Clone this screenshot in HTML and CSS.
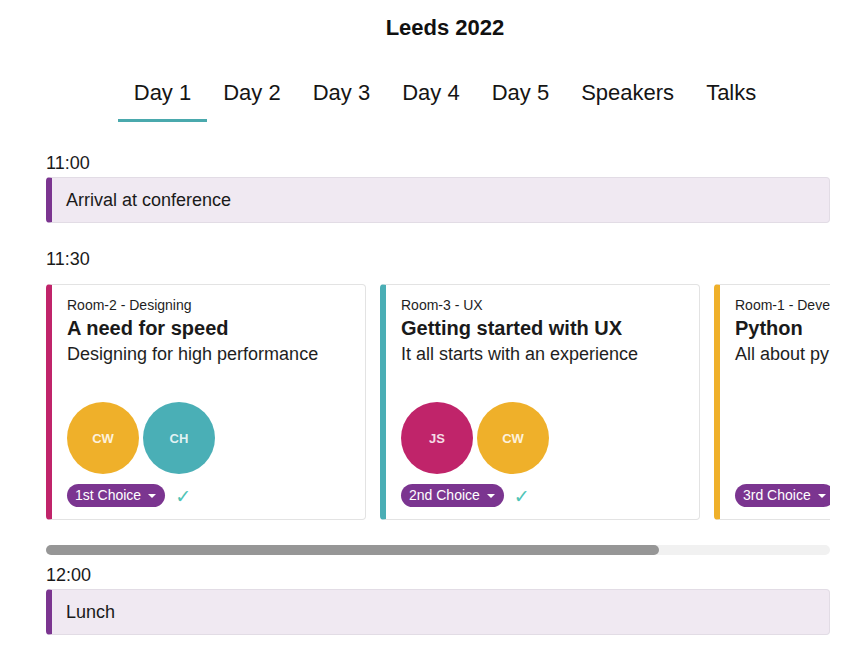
FILE: index.html
```html
<!DOCTYPE html>
<html lang="en">
<head>
<meta charset="utf-8">
<title>Leeds 2022</title>
<link rel="stylesheet" href="styles.css">
</head>
<body>
<div class="page">
  <header class="header">
    <h1 class="title">Leeds 2022</h1>
    <nav class="tabs">
      <a class="tab active">Day 1</a>
      <a class="tab">Day 2</a>
      <a class="tab">Day 3</a>
      <a class="tab">Day 4</a>
      <a class="tab">Day 5</a>
      <a class="tab">Speakers</a>
      <a class="tab">Talks</a>
    </nav>
  </header>

  <main class="schedule">
    <section class="slot">
      <div class="time">11:00</div>
      <div class="event">Arrival at conference</div>
    </section>

    <section class="slot slot-talks">
      <div class="time">11:30</div>
      <div class="scroller">
        <div class="cards">
          <article class="card card-magenta">
            <div class="room">Room-2 - Designing</div>
            <h2 class="talk-title">A need for speed</h2>
            <div class="talk-sub">Designing for high performance</div>
            <div class="avatars">
              <span class="avatar av-yellow">CW</span>
              <span class="avatar av-teal">CH</span>
            </div>
            <div class="footer">
              <span class="choice">1st Choice<span class="caret"></span></span>
              <span class="check">✓</span>
            </div>
          </article>
          <article class="card card-teal">
            <div class="room">Room-3 - UX</div>
            <h2 class="talk-title">Getting started with UX</h2>
            <div class="talk-sub">It all starts with an experience</div>
            <div class="avatars">
              <span class="avatar av-magenta">JS</span>
              <span class="avatar av-yellow">CW</span>
            </div>
            <div class="footer">
              <span class="choice">2nd Choice<span class="caret"></span></span>
              <span class="check">✓</span>
            </div>
          </article>
          <article class="card card-yellow">
            <div class="room">Room-1 - Deve</div>
            <h2 class="talk-title">Python</h2>
            <div class="talk-sub">All about py</div>
            <div class="footer">
              <span class="choice">3rd Choice<span class="caret"></span></span>
            </div>
          </article>
        </div>
      </div>
      <div class="scrollbar"><div class="thumb" style="width: 78.2%"></div></div>
    </section>

    <section class="slot slot-after">
      <div class="time">12:00</div>
      <div class="event">Lunch</div>
    </section>
  </main>
</div>
</body>
</html>
```

FILE: styles.css
```css
* { box-sizing: border-box; }

html, body {
  margin: 0;
  padding: 0;
  background: #ffffff;
  color: #1e1e1e;
  font-family: "Liberation Sans", Arial, sans-serif;
}

.page {
  margin-left: 46px;
  width: 798px;
  padding-top: 15px;
}

.header {
  display: flex;
  flex-direction: column;
  align-items: center;
}

.title {
  margin: 0;
  font-size: 22px;
  line-height: 26px;
  font-weight: bold;
  color: #111111;
}

.tabs {
  display: flex;
  margin-top: 30px;
}

.tab {
  display: block;
  font-size: 22px;
  line-height: 26px;
  padding: 9px 16px 13px;
  border-bottom: 3px solid transparent;
  color: #151515;
}

.tab.active {
  border-bottom-color: #4aa9ad;
}

.schedule {
  width: 784px;
  padding-top: 30px;
}

.time {
  font-size: 18px;
  line-height: 22px;
  margin-bottom: 3px;
  color: #1a1a1a;
}

.event {
  background: #f0e9f2;
  border: 1px solid #e2dce5;
  border-left: 6px solid #7b3590;
  border-radius: 4px;
  font-size: 18px;
  line-height: 22px;
  padding: 11px 14px;
  color: #1a1a1a;
}

.slot-talks {
  margin-top: 25px;
}

.slot-talks .time {
  margin-bottom: 14px;
}

.scroller {
  width: 784px;
  overflow: hidden;
}

.cards {
  display: flex;
  width: max-content;
}

.card {
  width: 320px;
  height: 236px;
  margin-right: 14px;
  display: flex;
  flex-direction: column;
  border: 1px solid #e3e3e3;
  border-left-width: 6px;
  border-radius: 4px;
  padding: 12px 14px 12px 15px;
  background: #ffffff;
}

.card-magenta { border-left-color: #c0246a; }
.card-teal { border-left-color: #4aaeb5; }
.card-yellow { border-left-color: #efb02a; }

.room {
  font-size: 14px;
  line-height: 17px;
  color: #1e1e1e;
}

.talk-title {
  margin: 2px 0 0;
  font-size: 20px;
  line-height: 24px;
  font-weight: bold;
  color: #1a1a1a;
}

.talk-sub {
  margin-top: 3px;
  font-size: 18px;
  line-height: 22px;
  color: #1e1e1e;
  white-space: nowrap;
}

.avatars {
  margin-top: auto;
  display: flex;
  gap: 4px;
}

.avatar {
  width: 72px;
  height: 72px;
  border-radius: 50%;
  display: flex;
  align-items: center;
  justify-content: center;
  font-size: 13px;
  font-weight: bold;
  color: rgba(255, 255, 255, 0.85);
}

.av-yellow { background: #efb02a; }
.av-teal { background: #4aafb6; }
.av-magenta { background: #c0246a; }

.footer {
  margin-top: 10px;
  display: flex;
  align-items: center;
}

.card-yellow .footer {
  margin-top: auto;
}

.choice {
  display: inline-flex;
  align-items: center;
  height: 23px;
  padding: 0 9px 0 8px;
  border-radius: 12px;
  background: #7b3590;
  color: #ffffff;
  font-size: 14px;
  line-height: 17px;
  white-space: nowrap;
}

.caret {
  width: 0;
  height: 0;
  margin-left: 7px;
  margin-top: 1px;
  border-left: 4px solid transparent;
  border-right: 4px solid transparent;
  border-top: 4px solid #ffffff;
}

.check {
  margin-left: 10px;
  color: #4fc4b6;
  font-size: 19px;
  line-height: 20px;
  font-family: "DejaVu Sans", sans-serif;
}

.scrollbar {
  margin-top: 25px;
  height: 10px;
  border-radius: 5px;
  background: #f1f1f1;
}

.thumb {
  height: 10px;
  border-radius: 5px;
  background: #969696;
}

.slot-after {
  margin-top: 9px;
}
```
